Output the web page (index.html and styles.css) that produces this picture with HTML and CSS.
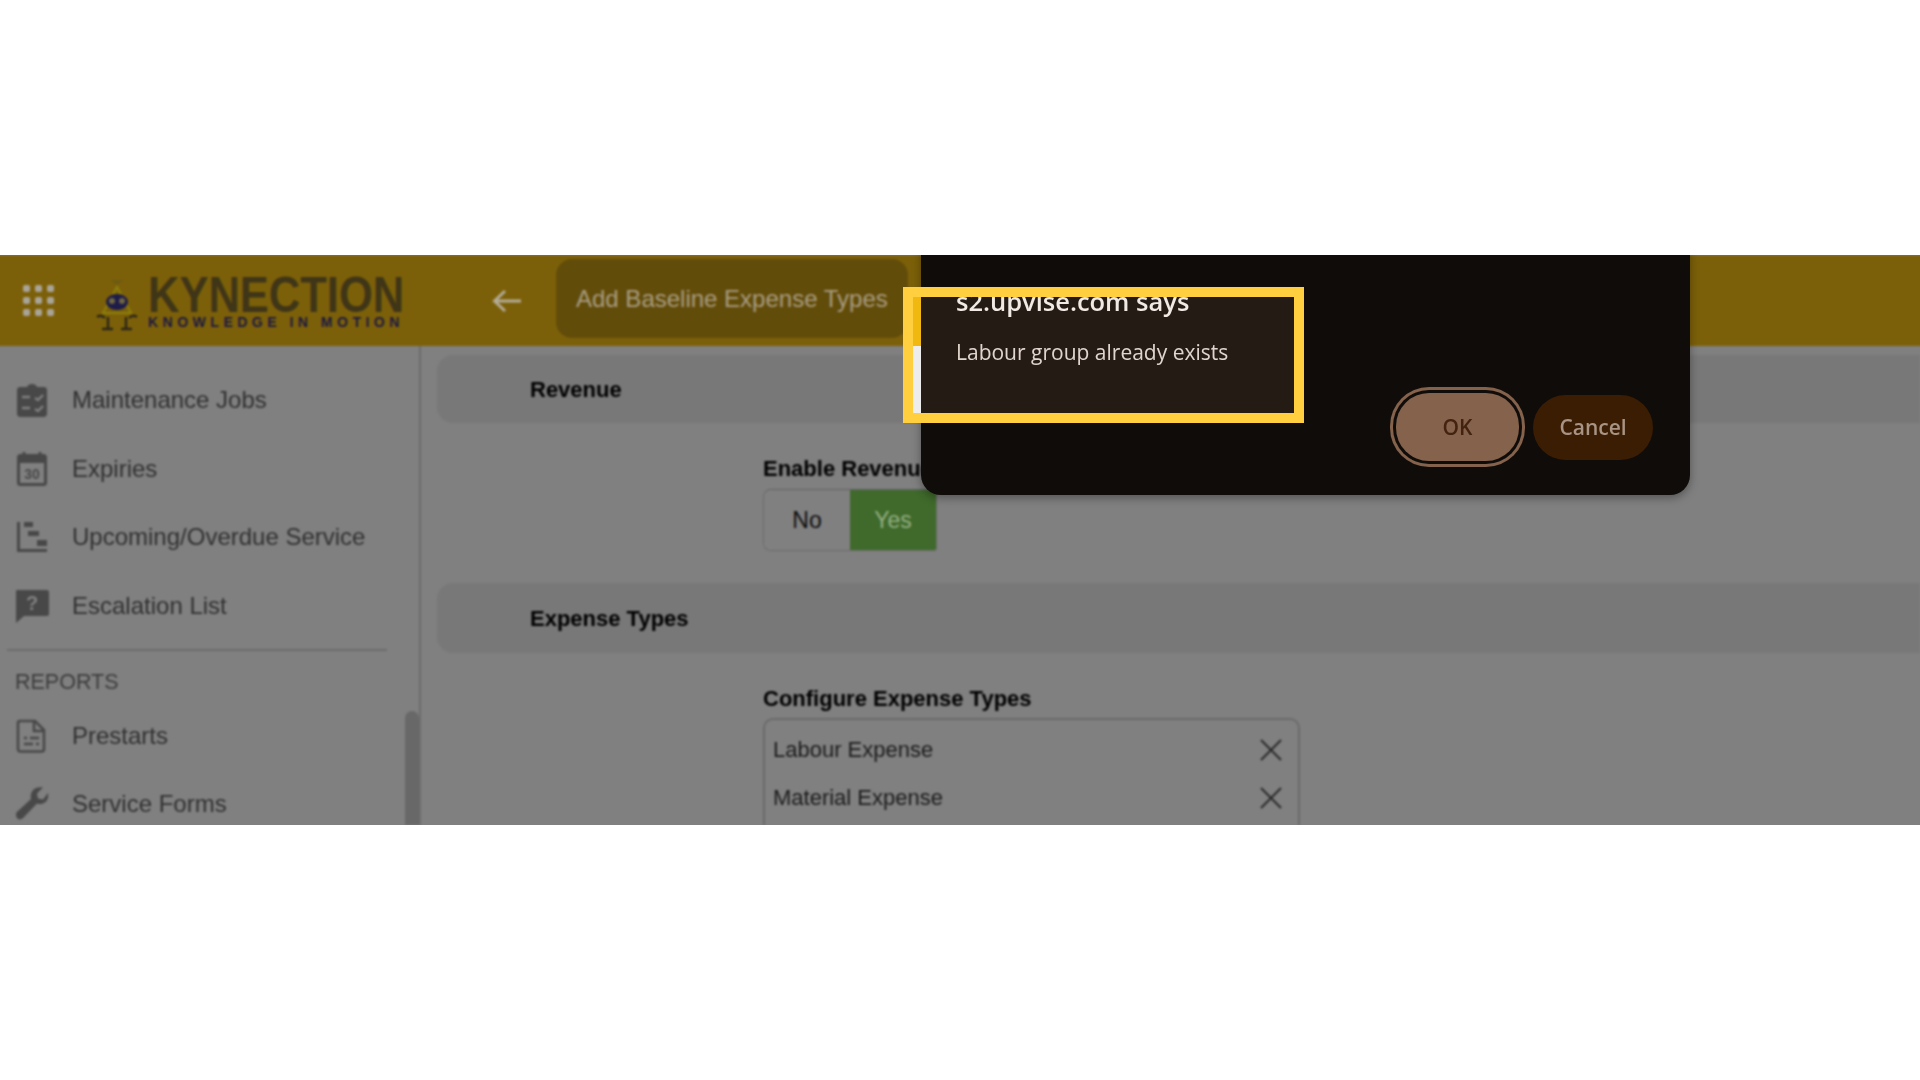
FILE: index.html
```html
<!DOCTYPE html>
<html lang="en">
<head>
    <meta charset="UTF-8">
    <meta name="viewport" content="width=device-width, initial-scale=1.0">
    <title>Add Baseline Expense Types</title>
    <link rel="stylesheet" href="styles.css">
</head>
<body>
    <div class="frame">
        <div class="app">
            <header class="topbar">
                <div class="apps-grid">
                    <span></span><span></span><span></span>
                    <span></span><span></span><span></span>
                    <span></span><span></span><span></span>
                </div>
                <svg class="robot" viewBox="0 0 44 54" width="44" height="54">
                    <path d="M15 3h14l-7 5z" fill="#6d5a12"/>
                    <path d="M22 10 8 36h28z" fill="none" stroke="#8c7f0c" stroke-width="2"/>
                    <ellipse cx="22" cy="25" rx="11" ry="8" fill="#1d1c4a"/>
                    <circle cx="17" cy="24" r="3" fill="#6f6540"/>
                    <circle cx="27" cy="24" r="3" fill="#6f6540"/>
                    <path d="M2 40c3-2 6-1 8 1M42 40c-3-2-6-1-8 1M13 40v11M31 40v11M7 52h11M26 52h11" fill="none" stroke="#2b2618" stroke-width="2.4"/>
                </svg>
                <div class="logo">
                    <div class="logo-name">KYNECTION</div>
                    <div class="logo-tag">KNOWLEDGE IN MOTION</div>
                </div>
                <svg class="back" viewBox="0 0 30 24" width="30" height="24">
                    <path d="M29 12H3M13 2 2.500 12 13 22" fill="none" stroke="#b3ab95" stroke-width="3"/>
                </svg>
                <div class="page-title">Add Baseline Expense Types</div>
            </header>
            <div class="main">
                <aside class="sidebar">
                    <nav class="nav">
                        <a class="nav-item">
                            <svg class="nav-icon" viewBox="0 0 34 34"><rect x="3" y="2" width="28" height="30" rx="2" fill="#484848"/></svg>
                        </a>
                        <a class="nav-item">
                            <svg class="nav-icon" viewBox="0 0 34 34">
                                <path d="M5 4h7c1-4 9-4 10 0h7c1.500 0 3 1 3 3v24c0 1.500-1.500 3-3 3H5c-1.500 0-3-1.500-3-3V7c0-2 1.500-3 3-3z" fill="#484848"/>
                                <path d="M7 14h8M7 25h8M20 15l3 2 5-5M20 26l3 2 5-5" fill="none" stroke="#808080" stroke-width="2.400"/>
                            </svg>
                            <span>Maintenance Jobs</span>
                        </a>
                        <a class="nav-item">
                            <svg class="nav-icon" viewBox="0 0 34 34">
                                <path d="M9 0v5M25 0v5" stroke="#484848" stroke-width="3"/>
                                <rect x="3.500" y="3.500" width="27" height="29" rx="2" fill="none" stroke="#484848" stroke-width="3"/>
                                <rect x="3" y="3" width="28" height="8" fill="#484848"/>
                                <text class="cal-num" x="17" y="27" text-anchor="middle">30</text>
                            </svg>
                            <span>Expiries</span>
                        </a>
                        <a class="nav-item">
                            <svg class="nav-icon" viewBox="0 0 34 34">
                                <path d="M3.500 2v28.500H32" fill="none" stroke="#484848" stroke-width="3"/>
                                <path d="M9 2h9v5H9zM13 11h11v5H13zM22 20h10v6H22z" fill="#484848"/>
                            </svg>
                            <span>Upcoming/Overdue Service</span>
                        </a>
                        <a class="nav-item">
                            <svg class="nav-icon" viewBox="0 0 34 34">
                                <path d="M2 1h30c1 0 2 1 2 2v22c0 1-1 2-2 2H9l-8 7V3c0-1 0-2 1-2z" fill="#484848"/>
                                <text class="bubble-mark" x="17" y="21" text-anchor="middle">?</text>
                            </svg>
                            <span>Escalation List</span>
                        </a>
                        <div class="nav-label">REPORTS</div>
                        <a class="nav-item">
                            <svg class="nav-icon" viewBox="0 0 34 34">
                                <path d="M5 2h15l9 9v19c0 1.500-1 2.500-2.500 2.500h-21C4 32.500 3 31.500 3 30V4c0-1.500.5-2 2-2z" fill="none" stroke="#484848" stroke-width="2.600"/>
                                <path d="M19 2v10h10" fill="none" stroke="#484848" stroke-width="2.600"/>
                                <path d="M9 19h3M15 19h9M9 25h9M21 25h3" stroke="#484848" stroke-width="2.600"/>
                            </svg>
                            <span>Prestarts</span>
                        </a>
                        <a class="nav-item">
                            <svg class="nav-icon" viewBox="0 0 34 34">
                                <path d="M33 6c1 5-1 10-7 11-2 .3-3 0-4-.5L9 30c-2 3-6 3-7 1s-2-5 1-7l13-12c-1-5 1-9 5-11 3-1 5-1 7-.5l-6 6 1 5 5 1z" fill="#484848"/>
                            </svg>
                            <span>Service Forms</span>
                        </a>
                    </nav>
                    <div class="scroll-thumb"></div>
                </aside>
                <section class="content">
                    <div class="band">Revenue</div>
                    <div class="field">
                        <div class="field-label">Enable Revenue</div>
                        <div class="toggle">
                            <div class="toggle-opt">No</div>
                            <div class="toggle-opt on">Yes</div>
                        </div>
                    </div>
                    <div class="band band-2">Expense Types</div>
                    <div class="field field-2">
                        <div class="field-label">Configure Expense Types</div>
                        <div class="list-box">
                            <div class="list-row">
                                <span>Labour Expense</span>
                                <svg class="x-icon" viewBox="0 0 22 22"><path d="M1 1l20 20M21 1 1 21"/></svg>
                            </div>
                            <div class="list-row">
                                <span>Material Expense</span>
                                <svg class="x-icon" viewBox="0 0 22 22"><path d="M1 1l20 20M21 1 1 21"/></svg>
                            </div>
                        </div>
                    </div>
                </section>
            </div>
        </div>

        <div class="dialog">
            <div class="dialog-actions">
                <button class="btn btn-ok">OK</button>
                <button class="btn btn-cancel">Cancel</button>
            </div>
        </div>

        <div class="highlight">
            <div class="slit">
                <div class="slit-top"></div>
                <div class="slit-bottom"></div>
            </div>
            <div class="dialog-title">s2.upvise.com says</div>
            <div class="dialog-msg">Labour group already exists</div>
        </div>
    </div>
</body>
</html>
```

FILE: styles.css
```css
body {
    margin: 0;
    background: #fff;
    font-family: "Liberation Sans", Arial, sans-serif;
}
.frame {
    position: relative;
    margin-top: 255px;
    height: 570px;
    overflow: hidden;
    background: #808080;
}
.app {
    margin: 0 -3px;
    padding: 0 3px;
    filter: blur(0.8px);
}
.topbar {
    display: flex;
    align-items: center;
    height: 91px;
    margin: 0 -3px;
    padding: 0 3px;
    background: #7c6009;
}
.apps-grid {
    display: grid;
    grid-template-columns: repeat(3, 7px);
    gap: 5px;
    margin-left: 23px;
}
.apps-grid span {
    width: 7px;
    height: 7px;
    border-radius: 2px;
    background: #a8a498;
}
.robot {
    margin-left: 41px;
    margin-top: 6px;
}
.logo {
    flex: none;
    width: 255px;
    margin-left: 9px;
    color: #3f3517;
}
.logo-name {
    font-size: 50px;
    font-weight: bold;
    line-height: 46px;
    white-space: nowrap;
    transform: scaleX(0.87);
    transform-origin: left center;
}
.logo-tag {
    margin-top: -3px;
    font-size: 14px;
    font-weight: bold;
    line-height: 14px;
    letter-spacing: 4.500px;
    white-space: nowrap;
    color: #1c1940;
}
.back {
    margin-left: 89px;
}
.page-title {
    display: flex;
    align-items: center;
    margin: 0 0 4px 34px;
    padding: 0 20px;
    width: 312px;
    height: 79px;
    border-radius: 16px;
    background: #624c0a;
    color: #a89c80;
    font-size: 24px;
    white-space: nowrap;
}
.main {
    display: flex;
    height: 479px;
}
.sidebar {
    position: relative;
    flex: none;
    width: 419px;
    overflow: hidden;
    border-right: 2px solid #6c6c6c;
}
.nav {
    margin-top: -49px;
}
.nav-item {
    display: flex;
    align-items: center;
    gap: 23px;
    height: 68.700px;
    padding-left: 15px;
    color: #303030;
    font-size: 24px;
}
.nav-icon {
    flex: none;
    width: 34px;
    height: 34px;
}
.cal-num {
    font-size: 14px;
    font-weight: bold;
    fill: #484848;
}
.bubble-mark {
    font-size: 20px;
    font-weight: bold;
    fill: #808080;
}
.nav-label {
    box-sizing: border-box;
    width: 380px;
    height: 52px;
    margin: 9px 0 0 7px;
    padding: 21px 0 0 8px;
    border-top: 2px solid #6c6c6c;
    color: #3c3c3c;
    font-size: 21.500px;
    line-height: 20px;
}
.scroll-thumb {
    position: absolute;
    right: 0;
    top: 365px;
    bottom: 0;
    width: 14px;
    border-radius: 7px 7px 0 0;
    background: #686868;
}
.content {
    flex: 1;
    padding: 9px 0 0 16px;
    overflow: hidden;
}
.band {
    display: flex;
    align-items: center;
    height: 66px;
    padding: 2px 0 0 93px;
    border-radius: 16px 0 0 16px;
    background: #787878;
    color: #000;
    font-size: 22px;
    font-weight: bold;
}
.band-2 {
    height: 68px;
}
.field {
    margin-left: 326px;
    padding: 34px 0 32px;
}
.field-2 {
    padding-bottom: 0;
}
.field-label {
    margin-bottom: 8px;
    color: #000;
    font-size: 22px;
    font-weight: bold;
    line-height: 24px;
}
.field-2 .field-label {
    margin-bottom: 7px;
}
.toggle {
    display: flex;
    box-sizing: border-box;
    width: 174px;
    height: 62px;
    border: 1px solid #6a6a6a;
    border-top-color: #606060;
    border-radius: 8px 3px 3px 8px;
    overflow: hidden;
}
.toggle-opt {
    display: flex;
    flex: 1;
    align-items: center;
    justify-content: center;
    background: #808080;
    color: #0e0e0e;
    font-size: 23px;
}
.toggle-opt.on {
    background: #3f6a2b;
    color: #94ae82;
}
.list-box {
    box-sizing: border-box;
    width: 537px;
    height: 130px;
    padding-top: 6px;
    border: 2px solid #6a6a6a;
    border-radius: 10px;
}
.list-row {
    display: flex;
    align-items: center;
    justify-content: space-between;
    height: 48px;
    padding: 0 16px 0 8px;
    color: #1a1a1a;
    font-size: 22px;
}
.x-icon {
    width: 22px;
    height: 22px;
    fill: none;
    stroke: #2a2a2a;
    stroke-width: 2;
}
.dialog {
    position: absolute;
    left: 921px;
    top: -20px;
    display: flex;
    align-items: flex-end;
    justify-content: flex-end;
    box-sizing: border-box;
    width: 769px;
    height: 260px;
    padding: 0 37px 34px 0;
    border-radius: 20px;
    background: #100c09;
    box-shadow: 0 3px 10px rgba(0, 0, 0, 0.35);
}
.dialog-actions {
    display: flex;
    align-items: center;
    gap: 14px;
}
.btn {
    border: none;
    border-radius: 33px;
    font-family: "Open Sans", sans-serif;
    font-size: 21px;
    font-weight: 600;
    filter: blur(0.5px);
}
.btn-ok {
    width: 123px;
    height: 68px;
    background: #84624c;
    color: #43230f;
    box-shadow: 0 0 0 3px #100c09, 0 0 0 6px #84624c;
}
.btn-cancel {
    width: 120px;
    height: 65px;
    background: #3b1d04;
    color: #a89484;
}
.highlight {
    position: absolute;
    left: 903px;
    top: 32px;
    box-sizing: border-box;
    width: 401px;
    height: 136px;
    padding-left: 43px;
    border: 10px solid #ffcf3f;
    overflow: hidden;
    background: #251b15;
}
.slit {
    position: absolute;
    left: 0;
    top: 0;
    bottom: 0;
    display: flex;
    flex-direction: column;
    width: 8px;
}
.slit-top {
    height: 49px;
    background: #f1b90f;
}
.slit-bottom {
    flex: 1;
    background: #ededed;
}
.dialog-title {
    margin-top: -11px;
    color: #f0e9e4;
    font-family: "Open Sans", sans-serif;
    font-size: 25.500px;
    font-weight: 600;
    line-height: 30px;
    filter: blur(0.5px);
}
.dialog-msg {
    margin-top: 22px;
    color: #e0d6cf;
    font-family: "Open Sans", sans-serif;
    font-size: 21px;
    line-height: 28px;
    filter: blur(0.5px);
}
```
